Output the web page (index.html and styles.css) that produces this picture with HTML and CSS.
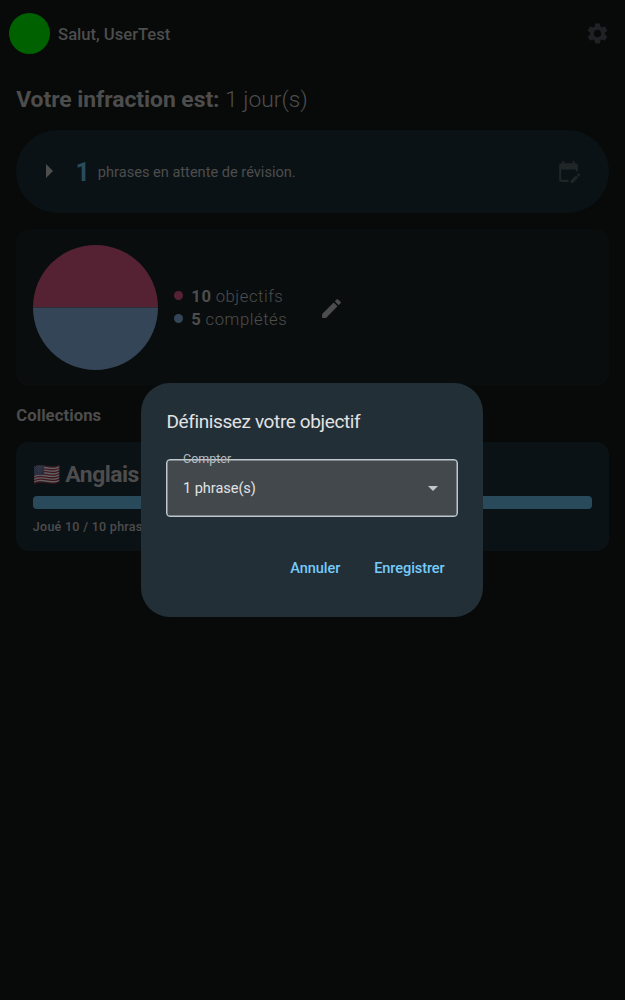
FILE: index.html
```html
<!DOCTYPE html>
<html lang="fr">
<head>
<meta charset="utf-8">
<title>Objectif</title>
<link rel="stylesheet" href="styles.css">
</head>
<body>
<main class="page">
  <header class="topbar">
    <div class="avatar"></div>
    <span class="greeting">Salut, UserTest</span>
    <svg class="gear" viewBox="0 0 24 24"><path d="M19.14 12.94c.04-.3.06-.61.06-.94 0-.32-.02-.64-.07-.94l2.03-1.58c.18-.14.23-.41.12-.61l-1.92-3.32c-.12-.22-.37-.29-.59-.22l-2.39.96c-.5-.38-1.03-.7-1.62-.94l-.36-2.54c-.04-.24-.24-.41-.48-.41h-3.84c-.24 0-.43.17-.47.41l-.36 2.54c-.59.24-1.13.57-1.62.94l-2.39-.96c-.22-.08-.47 0-.59.22L2.74 8.87c-.12.21-.08.47.12.61l2.03 1.58c-.05.3-.09.63-.09.94s.02.64.07.94l-2.03 1.58c-.18.14-.23.41-.12.61l1.92 3.32c.12.22.37.29.59.22l2.39-.96c.5.38 1.03.7 1.62.94l.36 2.54c.05.24.24.41.48.41h3.84c.24 0 .44-.17.47-.41l.36-2.54c.59-.24 1.13-.56 1.62-.94l2.39.96c.22.08.47 0 .59-.22l1.92-3.32c.12-.22.07-.47-.12-.61l-2.01-1.58zM12 15.6c-1.98 0-3.6-1.62-3.6-3.6s1.62-3.6 3.6-3.6 3.6 1.62 3.6 3.6-1.62 3.6-3.6 3.6z"/></svg>
  </header>
  <h1 class="streak"><b>Votre infraction est:</b> <span>1 jour(s)</span></h1>
  <section class="review">
    <svg class="play" viewBox="0 0 7 14"><path d="M0 0L7 7L0 14z"/></svg>
    <span class="review-count">1</span>
    <span class="review-text">phrases en attente de révision.</span>
    <svg class="calendar" viewBox="0 0 24 24"><path d="M5 22q-.82 0-1.41-.59T3 20V6q0-.82.59-1.41T5 4h1V2h2v2h8V2h2v2h1q.82 0 1.41.59T21 6v6h-2v-2H5v10h7v2zM22.13 17l-2.13-2.13.7-.7q.3-.3.71-.3t.71.3l.7.7q.3.3.3.71t-.3.71zM14 23v-2.12l5.3-5.3 2.12 2.12-5.3 5.3z"/></svg>
  </section>
  <section class="goal">
    <svg class="pie" viewBox="0 0 126 126"><path class="pink" d="M0 63a63 63 0 0 1 126 0z"/><path class="blue" d="M0 63a63 63 0 0 0 126 0z"/></svg>
    <ul class="legend">
      <li><i class="dot dot-pink"></i><b>10</b><span>objectifs</span></li>
      <li><i class="dot dot-blue"></i><b>5</b><span>complétés</span></li>
    </ul>
    <svg class="pencil" viewBox="0 0 24 24"><path d="M3 17.25V21h3.75L17.81 9.94l-3.75-3.75L3 17.25zM20.71 7.04c.39-.39.39-1.02 0-1.41l-2.34-2.34a.9959.9959 0 0 0-1.41 0l-1.83 1.83 3.75 3.75 1.83-1.83z"/></svg>
  </section>
  <h2 class="section-title">Collections</h2>
  <section class="collection">
    <div class="collection-name"><span class="flag">🇺🇸</span><b>Anglais</b></div>
    <div class="progress"></div>
    <p class="played">Joué 10 / 10 phrases</p>
  </section>
</main>
<div class="overlay">
  <div class="dialog">
    <h3 class="dialog-title">Définissez votre objectif</h3>
    <div class="select">
      <span class="select-label">Compter</span>
      <span class="select-value">1 phrase(s)</span>
      <svg class="caret" viewBox="0 0 10 5"><path d="M0 0h10L5 5z"/></svg>
    </div>
    <div class="actions"><span class="cancel">Annuler</span><span class="save">Enregistrer</span></div>
  </div>
</div>
</body>
</html>
```

FILE: styles.css
```css
* { box-sizing: border-box; }
body { margin: 0; background: #080a09; color: #4d4d4d; font-family: Roboto, sans-serif; white-space: nowrap; }
h1, h2, h3, p, ul { margin: 0; padding: 0; }
svg { display: block; flex: none; fill: currentColor; }
b { font-weight: 700; }
.page { height: 1000px; overflow: hidden; padding: 0 16.4px 0 16.2px; }
.topbar { height: 67px; display: flex; align-items: center; margin: 0 -8px 0 -7.6px; }
.avatar { width: 41.5px; height: 41.5px; border-radius: 50%; background: #006100; }
.greeting { margin: 1px 0 0 8px; font-size: 16.67px; font-weight: 500; letter-spacing: -.03px; }
.gear { width: 25px; height: 25px; margin-left: auto; margin-right: 7px; color: #1f2224; }
.streak { margin-top: 15px; height: 35px; line-height: 35px; font-size: 22.9px; font-weight: 300; letter-spacing: -.04px; }
.review { margin-top: 12.5px; height: 83px; border-radius: 42px; background: #0b1215; display: flex; align-items: center; padding: 0 28px 0 30.3px; }
.play { width: 7px; height: 14px; }
.review-count { margin: 2px 0 0 22px; font-size: 25px; font-weight: 700; color: #294b5c; }
.review-text { margin: 1px 0 0 8px; font-size: 14.58px; }
.calendar { width: 25px; height: 25px; margin-left: auto; color: #202628; }
.goal { margin-top: 16px; height: 157.5px; border-radius: 12.5px; background: #090d0e; display: flex; align-items: center; padding: 0 16.6px; }
.pie { width: 125px; height: 125px; }
.pink { fill: #552233; }
.blue { fill: #334556; }
.legend { list-style: none; margin: 2px 0 0 16px; width: 145px; font-size: 16.67px; line-height: 23px; letter-spacing: .55px; font-weight: 300; }
.legend li { display: flex; align-items: center; }
.legend span { margin-left: 4.2px; }
.dot { width: 9px; height: 9px; border-radius: 50%; margin: 0 8.5px 2px 0; }
.dot-pink { background: #552233; }
.dot-blue { background: #334556; }
.pencil { width: 25px; height: 25px; margin-top: 2px; }
.section-title { margin-top: 18px; height: 24px; line-height: 24px; font-size: 16.67px; font-weight: 700; letter-spacing: .08px; }
.collection { margin-top: 14px; height: 109px; border-radius: 12.5px; background: #0b1215; padding: 16px 16.6px; }
.collection-name { height: 32px; display: flex; align-items: center; font-size: 22.9px; letter-spacing: -.5px; }
.flag { width: 26px; margin-right: 6.5px; font-size: 22px; opacity: .35; }
.progress { margin-top: 6px; height: 12.5px; border-radius: 4px; background: #294a5b; }
.played { margin-top: 8px; line-height: 19px; font-size: 12.5px; font-weight: 500; letter-spacing: .28px; }
.overlay { position: absolute; inset: 0 .6px 0 0; display: flex; align-items: center; justify-content: center; }
.dialog { width: 341.6px; height: 234px; border-radius: 29px; background: #232f37; padding: 25px; }
.dialog-title { height: 28px; line-height: 28px; font-size: 19px; font-weight: 400; letter-spacing: -.38px; color: #e1e2e4; }
.select { position: relative; margin-top: 22.5px; height: 58.5px; border: 1px solid #c0c7cd; box-shadow: inset 0 0 0 .5px #c0c7cd; border-radius: 4px; background: #43484d; display: flex; align-items: center; padding: 0 19px 0 15.6px; color: #e1e2e4; }
.select-label { position: absolute; left: 15.6px; top: -10px; line-height: 18px; font-size: 12.5px; color: #b5bcc2; }
.select-value { font-size: 14.58px; letter-spacing: -.06px; margin-top: 1px; }
.caret { width: 10px; height: 5px; margin-left: auto; margin-top: 1px; color: #c0c7cd; }
.actions { margin-top: 41px; display: flex; justify-content: flex-end; gap: 34px; padding-right: 13.4px; line-height: 21px; font-size: 14.58px; font-weight: 500; letter-spacing: -.1px; color: #75cbfa; }
```
